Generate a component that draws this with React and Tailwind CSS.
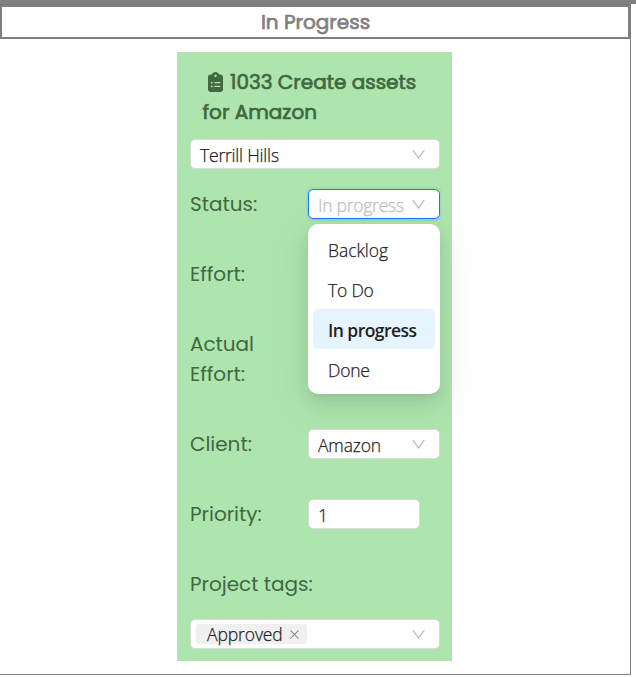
import { AiOutlineDown, AiOutlineClose } from "react-icons/ai";
import { FaClipboardList } from "react-icons/fa6";

const options = [
  { name: "Backlog", spacing: "tracking-[-0.05px]" },
  { name: "To Do", spacing: "tracking-[-0.2px]" },
  { name: "In progress", spacing: "tracking-[-0.55px]" },
  { name: "Done", spacing: "tracking-[-0.2px]" },
];

function Label({ children, className = "" }) {
  return (
    <span className={`font-['Poppins','Inter',sans-serif] text-[20px] leading-[30px] font-normal tracking-[-0.02px] text-[#416841] ${className}`}>
      {children}
    </span>
  );
}

function Select({ value, className = "", textClass = "text-[#1f1f1f]" }) {
  return (
    <div className={`flex h-[30px] items-center justify-between rounded-[5px] border bg-white pr-[12px] pl-[9px] ${className}`}>
      <span className={`pt-px leading-7 whitespace-nowrap ${textClass}`}>{value}</span>
      <AiOutlineDown className="-ml-4 size-[17px] shrink-0 text-[#bfbfbf]" />
    </div>
  );
}

function StatusMenu() {
  return (
    <ul className="absolute top-[35px] left-0 z-10 w-[132px] rounded-[10px] bg-white p-[5px] text-[17.5px] shadow-[0_8px_20px_0_rgba(0,0,0,0.08),0_4px_8px_-5px_rgba(0,0,0,0.12),0_11px_35px_10px_rgba(0,0,0,0.05)]">
      {options.map(({ name, spacing }) => (
        <li
          key={name}
          className={`flex h-10 items-center rounded-[5px] pt-[3px] pl-[15px] whitespace-nowrap text-[#1f1f1f] ${spacing} ${
            name === "In progress" ? "bg-[#e6f4ff] font-semibold [-webkit-text-stroke:0]" : ""
          }`}
        >
          {name}
        </li>
      ))}
    </ul>
  );
}

export default function App() {
  return (
    <div className="h-[677px] w-[636px] overflow-hidden bg-white font-['Segoe_UI','Open_Sans',sans-serif] text-[17.5px] font-light [-webkit-text-stroke:0.25px]">
      <div className="h-1 bg-[#808080]" />
      <main className="h-[671px] w-[631px] border-r border-b border-[#808080] pt-px shadow-[inset_0_1px_0_#777]">
        <h1 className="flex h-[34px] items-center justify-center border-2 border-[#808080] pl-px font-['Poppins','Inter',sans-serif] text-[20px] leading-[30px] font-normal [-webkit-text-stroke:0.7px] text-[#808080]">
          In Progress
        </h1>
        <section className="mt-[13px] ml-[177px] flex h-[609px] w-[275px] flex-col bg-[#aee5ae] pr-[12px] pl-[13px] pt-[15px]">
          <h2 className="pl-[12.5px] font-['Poppins','Inter',sans-serif] text-[20px] leading-[30px] font-normal [-webkit-text-stroke:0.7px] text-[#416841]">
            <span className="flex items-center whitespace-nowrap">
              <FaClipboardList className="mr-[7px] ml-[5.5px] h-[20px] w-[15px] [stroke-width:0]" />
              1033 Create assets
            </span>
            <span className="block">for Amazon</span>
          </h2>
          <Select value="Terrill Hills" className="mt-3 border-[#d9d9d9]" textClass="text-[#1f1f1f] tracking-[-0.2px]" />
          <div className="mt-5 grid grid-cols-[118px_132px] gap-y-10 [-webkit-text-stroke:0]">
            <Label>Status:</Label>
            <div className="relative [-webkit-text-stroke:0.25px]">
              <Select
                value="In progress"
                className="border-[#1677ff] shadow-[0_0_0_2px_rgba(5,145,255,0.1)]"
                textClass="text-[#bfbfbf] tracking-[-0.25px]"
              />
              <StatusMenu />
            </div>
            <Label className="col-span-2">Effort:</Label>
            <Label className="col-span-2 w-[90px]">Actual Effort:</Label>
            <Label>Client:</Label>
            <Select value="Amazon" className="border-[#d9d9d9] [-webkit-text-stroke:0.25px]" textClass="text-[#1f1f1f] tracking-[-0.15px]" />
            <Label>Priority:</Label>
            <div className="flex h-[30px] w-[112px] items-center rounded-[5px] border border-[#d9d9d9] bg-white pt-[3px] pl-[9px] text-[#1f1f1f] [-webkit-text-stroke:0.25px]">
              1
            </div>
            <Label className="col-span-2">Project tags:</Label>
          </div>
          <div className="mt-5 flex h-[30px] items-center justify-between rounded-[5px] border border-[#d9d9d9] bg-white pr-[12px] pl-[5px]">
            <span className="flex h-5 w-[111px] items-center gap-[5px] rounded-[3px] bg-[#f0f0f0] pl-[11px] text-[#1f1f1f]">
              <span className="tracking-[-0.1px]">Approved</span>
              <AiOutlineClose className="size-[13px] shrink-0 text-[#8c8c8c]" />
            </span>
            <AiOutlineDown className="size-[17px] text-[#bfbfbf]" />
          </div>
        </section>
      </main>
    </div>
  );
}
